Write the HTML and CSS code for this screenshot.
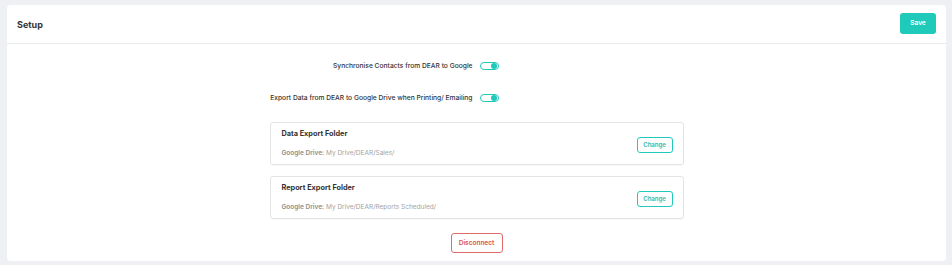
FILE: index.html
```html
<!DOCTYPE html>
<html lang="en">

<head>
  <meta charset="UTF-8">
  <meta name="viewport" content="width=device-width, initial-scale=1.0">
  <title>Setup</title>
  <link rel="stylesheet" href="styles.css">
</head>

<body>
  <div class="panel">
    <header class="panel-header">
      <span class="panel-title">Setup</span>
      <button class="btn btn-save">Save</button>
    </header>

    <div class="panel-body">
      <div class="option-row">
        <label class="option-label">Synchronise Contacts from DEAR to Google</label>
        <span class="toggle is-on"><span class="knob"></span></span>
      </div>
      <div class="option-row">
        <label class="option-label">Export Data from DEAR to Google Drive when Printing/ Emailing</label>
        <span class="toggle is-on"><span class="knob"></span></span>
      </div>

      <div class="folders">
        <div class="folder-card">
          <div class="folder-info">
            <div class="folder-title">Data Export Folder</div>
            <div class="folder-path"><b>Google Drive:</b> My Drive/DEAR/Sales/</div>
          </div>
          <button class="btn btn-change">Change</button>
        </div>
        <div class="folder-card">
          <div class="folder-info">
            <div class="folder-title">Report Export Folder</div>
            <div class="folder-path"><b>Google Drive:</b> My Drive/DEAR/Reports Scheduled/</div>
          </div>
          <button class="btn btn-change">Change</button>
        </div>
      </div>

      <div class="actions">
        <button class="btn btn-disconnect">Disconnect</button>
      </div>
    </div>
  </div>
</body>

</html>
```

FILE: styles.css
```css
* {
  margin: 0;
  padding: 0;
  box-sizing: border-box;
  font-family: 'Inter', 'Liberation Sans', sans-serif;
}

body {
  width: 952px;
  height: 265px;
  background: #eef0f3;
  padding: 5px 6px 4px 7px;
  color: #333;
}

.panel {
  height: 256px;
  background: #fff;
  border-radius: 4px;
  display: flex;
  flex-direction: column;
}

.panel-header {
  height: 39px;
  display: flex;
  align-items: center;
  justify-content: space-between;
  padding: 0 10px 0 10px;
  border-bottom: 1px solid #e9eaec;
}

.panel-title {
  font-size: 9px;
  font-weight: 700;
  color: #333;
}

.btn {
  background: #fff;
  border-radius: 3px;
  font-size: 6.5px;
  font-weight: 600;
  cursor: pointer;
}

.btn-save {
  width: 36px;
  height: 21px;
  margin-top: -2px;
  background: #1fcabb;
  border: none;
  color: #fff;
}

.panel-body {
  padding-top: 14px;
  display: flex;
  flex-direction: column;
  align-items: center;
}

.option-row {
  width: 100%;
  height: 16px;
  margin-bottom: 16px;
  display: grid;
  grid-template-columns: 1fr 1fr;
  align-items: center;
}

.option-label {
  text-align: right;
  padding-right: 4px;
  font-size: 6.7px;
  font-weight: 500;
  color: #333;
  white-space: nowrap;
}

.toggle {
  margin-left: 3px;
  width: 19px;
  height: 8px;
  border: 1.5px solid #1fcabb;
  border-radius: 5px;
  display: flex;
  align-items: center;
  justify-content: flex-end;
  padding-right: 1px;
}

.toggle .knob {
  width: 6px;
  height: 6px;
  border-radius: 50%;
  background: #1fcabb;
}

.folders {
  width: 414px;
  display: flex;
  flex-direction: column;
  gap: 11px;
}

.folder-card {
  height: 43px;
  border: 1px solid #e3e4e7;
  border-radius: 3px;
  padding: 0 10px 0 11px;
  display: flex;
  align-items: center;
  justify-content: space-between;
  box-shadow: 0 1px 1px rgba(0, 0, 0, 0.03);
}

.folder-title {
  font-size: 7.3px;
  font-weight: 700;
  color: #333;
  margin-top: -2px;
}

.folder-path {
  margin-top: 11px;
  font-size: 6.5px;
  color: #a3a3a3;
}

.folder-path b {
  font-weight: 600;
  color: #8f8f8f;
}

.btn-change {
  width: 36px;
  height: 16px;
  margin-top: 2px;
  border: 1px solid #1fcabb;
  color: #1fbcae;
  font-size: 6px;
}

.actions {
  margin-top: 10px;
}

.btn-disconnect {
  width: 52px;
  height: 20px;
  border: 1px solid #e06a6a;
  color: #d9534f;
}
```
